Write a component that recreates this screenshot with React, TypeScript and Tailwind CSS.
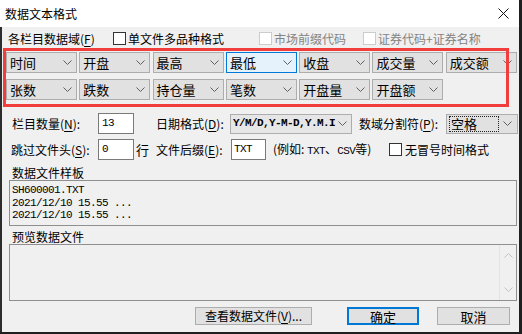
import * as React from 'react';
import clsx from 'clsx';

const Chevron: React.FC<{ color?: string }> = ({ color = '#606060' }) => (
    <svg width="9" height="5" viewBox="0 0 9 5" className="shrink-0">
        <path d="M0.5 0.5 L4.5 4.5 L8.5 0.5" stroke={color} fill="none" strokeWidth="1" />
    </svg>
);

const U: React.FC<{ children: React.ReactNode }> = ({ children }) => <span className="underline underline-offset-2">{children}</span>;

const Field: React.FC<{ label: string; focused?: boolean }> = ({ label, focused }) => (
    <div
        className={clsx(
            'flex h-[21px] w-[71px] shrink-0 items-center justify-between border pr-[4px] pl-[3px] text-[13px] leading-none',
            focused ? 'border-[#0078d7] bg-[#e5f1fb]' : 'border-[#adadad] bg-[#e1e1e1]',
        )}
    >
        <span>{label}</span>
        <Chevron />
    </div>
);

const Check: React.FC<{ disabled?: boolean }> = ({ disabled }) => (
    <div className={clsx('h-[13px] w-[13px] shrink-0 border bg-white', disabled ? 'border-[#cccccc]' : 'border-[#333333]')} />
);

const row1 = ['时间', '开盘', '最高', '最低', '收盘', '成交量', '成交额'];
const row2 = ['张数', '跌数', '持仓量', '笔数', '开盘量', '开盘额'];

const mono = "font-['Liberation_Mono',monospace] text-[11px] tracking-[-0.6px]";

export default function App() {
    return (
        <div className="h-[334px] w-[522px] overflow-hidden bg-[#1f1f1f] font-['Noto_Sans_CJK_SC','Liberation_Sans',sans-serif] text-[12px] text-black">
            <div className="relative flex h-[332px] w-[519px] flex-col bg-[#f0f0f0] shadow-[inset_2px_0_0_#2d2d2d]">
                {/* title bar */}
                <div className="flex h-[27px] items-center justify-between bg-white pr-[10px] pl-[5px]">
                    <span className="text-[12px]">数据文本格式</span>
                    <svg width="11" height="11" viewBox="0 0 11 11">
                        <path d="M0.5 0.5 L10.5 10.5 M10.5 0.5 L0.5 10.5" stroke="#111" strokeWidth="1" />
                    </svg>
                </div>

                {/* fields header */}
                <div className="mt-[4px] flex h-[15px] items-center pl-[8px] leading-none">
                    <span className="w-[105px]">
                        各栏目数据域(<U>F</U>)
                    </span>
                    <div className="flex w-[146px] items-center gap-[2px]">
                        <Check />
                        <span>单文件多品种格式</span>
                    </div>
                    <div className="flex w-[104px] items-center gap-[2px] text-[#838383]">
                        <Check disabled />
                        <span>市场前缀代码</span>
                    </div>
                    <div className="flex items-center gap-[2px] text-[#838383]">
                        <Check disabled />
                        <span>证券代码+证券名称</span>
                    </div>
                </div>

                <div className="mt-[6px] flex gap-[2.3px] pl-[6px]">
                    {row1.map((l) => (
                        <Field key={l} label={l} focused={l === '最低'} />
                    ))}
                </div>
                <div className="mt-[6px] flex gap-[2.3px] pl-[6px]">
                    {row2.map((l) => (
                        <Field key={l} label={l} />
                    ))}
                </div>

                {/* count / date / separator */}
                <div className="mt-[13px] flex h-[21px] items-center pl-[12px] leading-none">
                    <span className="w-[86px]">
                        栏目数量(<U>N</U>):
                    </span>
                    <div className={clsx('flex h-[21px] w-[36px] items-start border border-[#7a7a7a] bg-white pt-[4px] pl-[3px]', mono)}>13</div>
                    <span className="ml-[22px] w-[74px]">
                        日期格式(<U>D</U>):
                    </span>
                    <div className="flex h-[20px] w-[122px] items-center justify-between overflow-hidden border border-[#adadad] bg-[#e6e6e6] pr-[4px] pl-[2px]">
                        <span className={clsx(mono, 'font-bold whitespace-nowrap')}>Y/M/D,Y-M-D,Y.M.I</span>
                        <Chevron />
                    </div>
                    <span className="ml-[7px] w-[87px]">
                        数域分割符(<U>P</U>):
                    </span>
                    <div className="flex h-[20px] w-[72px] items-center justify-between border border-[#adadad] bg-[#e1e1e1] pr-[5px] pl-[2px]">
                        <span className="flex h-[16px] w-[50px] items-center border border-dotted border-[#222] pl-[1px] text-[13px]">空格</span>
                        <Chevron />
                    </div>
                </div>

                {/* skip / suffix */}
                <div className="mt-[5px] flex h-[21px] items-center pl-[11px] leading-none">
                    <span className="w-[87px]">
                        跳过文件头(<U>S</U>):
                    </span>
                    <div className={clsx('flex h-[21px] w-[36px] items-start border border-[#7a7a7a] bg-white pt-[4px] pl-[3px]', mono)}>0</div>
                    <span className="ml-[2px] w-[20px] text-[13px]">行</span>
                    <span className="w-[75px]">
                        文件后缀(<U>E</U>):
                    </span>
                    <div className={clsx('flex h-[21px] w-[35px] items-start border border-[#7a7a7a] bg-white pt-[4px] pl-[2px]', mono)}>TXT</div>
                    <span className="ml-[7px] w-[116px] whitespace-nowrap">
                        (例如: <span className={mono}>TXT</span>、<span className={mono}>CSV</span>等)
                    </span>
                    <div className="flex items-center gap-[3px]">
                        <Check />
                        <span>无冒号时间格式</span>
                    </div>
                </div>

                {/* sample */}
                <div className="mt-[5px] flex h-[15px] items-center pl-[12px] leading-none">数据文件样板</div>
                <div className={clsx('ml-[9px] h-[46px] w-[508px] border border-[#8f8f8f] pt-[3px] pl-[2px] leading-[12.5px]', mono)}>
                    <div>SH600001.TXT</div>
                    <div>2021/12/10 15.55 ...</div>
                    <div>2021/12/10 15.55 ...</div>
                </div>

                <div className="mt-[3px] flex h-[15px] items-center pl-[12px] leading-none">预览数据文件</div>
                <div className="ml-[9px] flex h-[57px] w-[508px] border border-[#8f8f8f]">
                    <div className="flex-1" />
                    <div className="flex w-[17px] flex-col items-center justify-between border-l border-[#e3e3e3] py-[8px]">
                        <svg width="9" height="5" viewBox="0 0 9 5">
                            <path d="M0.5 4.5 L4.5 0.5 L8.5 4.5" stroke="#c2c2c2" fill="none" />
                        </svg>
                        <Chevron color="#c2c2c2" />
                    </div>
                </div>

                {/* buttons */}
                <div className="mt-[6px] flex h-[18px] items-stretch pl-[195px] leading-none">
                    <div className="flex w-[117px] items-center justify-center border border-[#adadad] bg-[#e1e1e1]">
                        查看数据文件(<U>V</U>)...
                    </div>
                    <div className="ml-[35px] flex w-[72px] items-center justify-center border-2 border-[#0078d7] bg-[#e1e1e1] text-[13px]">
                        确定
                    </div>
                    <div className="ml-[18px] flex w-[73px] items-center justify-center border border-[#adadad] bg-[#e1e1e1] text-[13px]">
                        取消
                    </div>
                </div>

                {/* annotation */}
                <div className="pointer-events-none absolute top-[48px] left-[3px] h-[59px] w-[506px] border-[3px] border-[#f23d3d]" />
            </div>
        </div>
    );
}
